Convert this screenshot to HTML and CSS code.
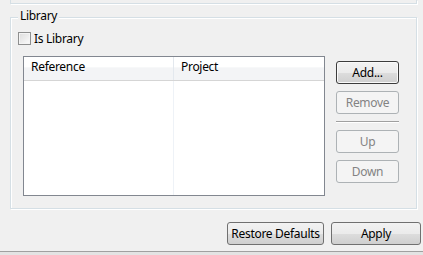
FILE: index.html
```html
<!DOCTYPE html>
<html>
<head>
<meta charset="utf-8">
<link rel="stylesheet" href="styles.css">
</head>
<body>
<div class="page">
  <div class="prev-group"></div>
  <div class="group">
    <span class="legend">Library</span>
    <label class="check-row"><span class="checkbox"></span><span>Is Library</span></label>
    <div class="content">
      <div class="table">
        <div class="thead">
          <div class="th col1">Reference</div>
          <div class="th col2">Project</div>
        </div>
        <div class="tbody">
          <div class="td col1"></div>
          <div class="td col2"></div>
        </div>
      </div>
      <div class="buttons">
        <button class="btn default">Add...</button>
        <button class="btn disabled">Remove</button>
        <div class="sep"></div>
        <button class="btn disabled">Up</button>
        <button class="btn disabled">Down</button>
      </div>
    </div>
  </div>
  <div class="footer">
    <button class="btn restore">Restore Defaults</button>
    <button class="btn apply">Apply</button>
  </div>
  <div class="bottom-line"></div>
</div>
</body>
</html>
```
FILE: styles.css
```css
html, body {
  margin: 0;
  padding: 0;
  background: #f0f0f0;
}
body {
  font-family: "Noto Sans", "Noto Sans CJK KR", sans-serif;
  font-size: 12px;
  letter-spacing: -0.3px;
  color: #000;
  width: 423px;
  height: 255px;
  overflow: hidden;
}
.page {
  display: flex;
  flex-direction: column;
}
.prev-group {
  margin: 0 6px 0 10px;
  height: 3px;
  border: 1px solid #d5dfe5;
  border-top: none;
  box-shadow: 1px 1px 0 #fff;
}
.group {
  position: relative;
  margin: 13px 6px 0 10px;
  height: 192px;
  box-sizing: border-box;
  border: 1px solid #d5dfe5;
  box-shadow: inset 1px 1px 0 #fff, 1px 1px 0 #fff;
  padding: 14px 0 0 7px;
}
.legend {
  position: absolute;
  left: 7px;
  top: -10px;
  padding: 0 2px;
  background: #f0f0f0;
  line-height: 16px;
}
.check-row {
  display: flex;
  align-items: center;
  height: 13px;
  gap: 3px;
  line-height: 13px;
}
.checkbox {
  width: 11px;
  height: 11px;
  border: 1px solid #8e8f8f;
  background: linear-gradient(135deg, #dcdcdc, #fbfbfb);
  box-shadow: inset 0 0 0 1px #f4f4f4;
}
.content {
  display: flex;
  margin: 11px 0 0 5px;
}
.table {
  width: 300px;
  height: 138px;
  border: 1px solid #828790;
  background: #fff;
  display: flex;
  flex-direction: column;
}
.thead {
  display: flex;
  height: 23px;
  border-bottom: 1px solid #d5d5d5;
  background: linear-gradient(#ffffff 0%, #ffffff 45%, #f3f4f6 46%, #f3f4f6 100%);
}
.th {
  padding: 0 7px;
  line-height: 20px;
}
.col1 {
  width: 150px;
  box-sizing: border-box;
  border-right: 1px solid #e3e8ee;
}
.col2 {
  flex: 1;
}
.tbody {
  flex: 1;
  display: flex;
}
.td.col1 {
  border-right: 1px solid #eef2f7;
}
.buttons {
  margin: 5px 0 0 11px;
  display: flex;
  flex-direction: column;
  width: 63px;
  gap: 7px;
}
.btn {
  font-family: "Noto Sans", "Noto Sans CJK KR", sans-serif;
  font-size: 12px;
  letter-spacing: -0.3px;
  height: 23px;
  padding: 0;
  border: 1px solid #707070;
  border-radius: 3px;
  background: linear-gradient(#f2f2f2 0%, #ebebeb 50%, #dddddd 51%, #cfcfcf 100%);
  color: #000;
  line-height: 19px;
}
.btn.default {
  border-color: #3c3c3c;
  box-shadow: inset 0 0 0 1px #fafafa;
}
.btn.disabled {
  border-color: #adb2b5;
  background: #f4f4f4;
  color: #838383;
}
.sep {
  height: 1px;
  background: #a0a0a0;
  border-bottom: 1px solid #fff;
}
.footer {
  display: flex;
  justify-content: flex-end;
  gap: 7px;
  margin: 13px 2px 0 0;
}
.restore {
  width: 97px;
}
.apply {
  width: 90px;
}
.bottom-line {
  margin-top: 6px;
  height: 1px;
  background: #a0a0a0;
  border-bottom: 4px solid #e3e3e3;
}
```
